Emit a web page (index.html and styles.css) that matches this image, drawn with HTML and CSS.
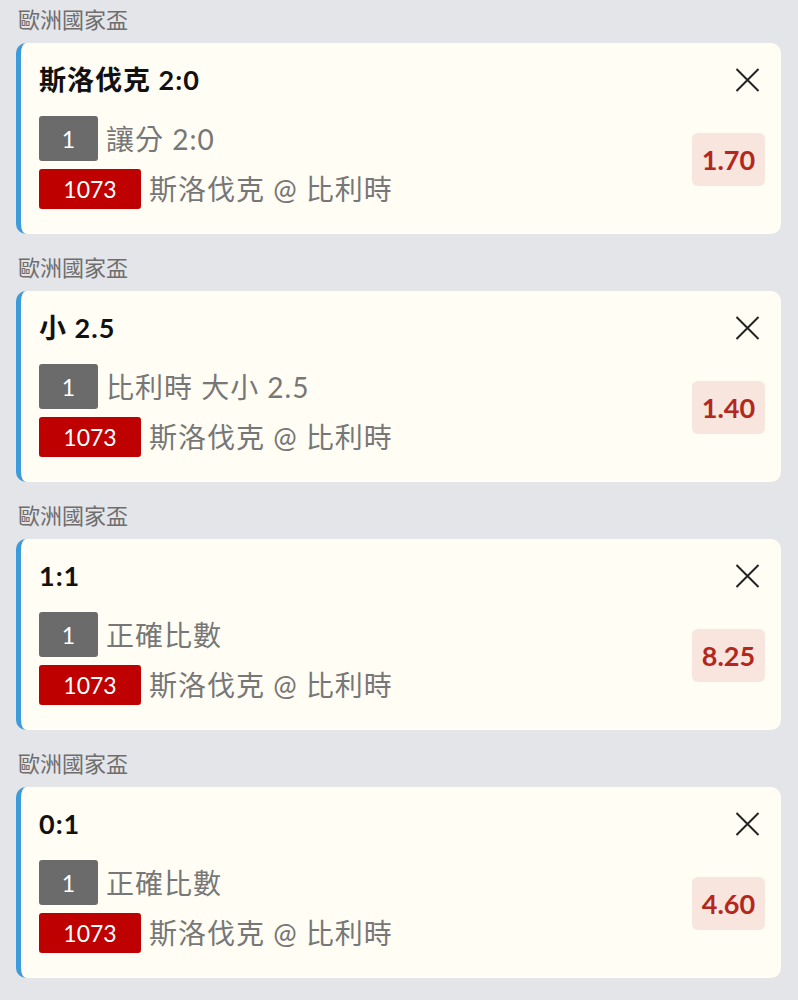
FILE: index.html
```html
<!DOCTYPE html>
<html lang="zh-Hant">
  <head>
    <meta charset="UTF-8" />
    <meta name="viewport" content="width=device-width, initial-scale=1.0" />
    <title>投注單</title>
    <link rel="stylesheet" href="styles.css">
  </head>
  <body>
    <div class="slip">
      <div class="bet">
        <p class="league">歐洲國家盃</p>
        <div class="card">
          <div class="info">
            <p class="pick">斯洛伐克 2:0</p>
            <div class="line">
              <span class="tag tag-leg">1</span>
              <span class="market">讓分 2:0</span>
            </div>
            <div class="line line-match">
              <span class="tag tag-match">1073</span>
              <span class="market">斯洛伐克 @ 比利時</span>
            </div>
          </div>
          <div class="side">
            <button class="remove" aria-label="移除">
              <svg width="25" height="24" viewBox="0 0 25 24"><path d="M1.5 1 L23.5 23 M23.5 1 L1.5 23" /></svg>
            </button>
            <span class="odds">1.70</span>
          </div>
        </div>
      </div>

      <div class="bet">
        <p class="league">歐洲國家盃</p>
        <div class="card">
          <div class="info">
            <p class="pick">小 2.5</p>
            <div class="line">
              <span class="tag tag-leg">1</span>
              <span class="market">比利時 大小 2.5</span>
            </div>
            <div class="line line-match">
              <span class="tag tag-match">1073</span>
              <span class="market">斯洛伐克 @ 比利時</span>
            </div>
          </div>
          <div class="side">
            <button class="remove" aria-label="移除">
              <svg width="25" height="24" viewBox="0 0 25 24"><path d="M1.5 1 L23.5 23 M23.5 1 L1.5 23" /></svg>
            </button>
            <span class="odds">1.40</span>
          </div>
        </div>
      </div>

      <div class="bet">
        <p class="league">歐洲國家盃</p>
        <div class="card">
          <div class="info">
            <p class="pick">1:1</p>
            <div class="line">
              <span class="tag tag-leg">1</span>
              <span class="market">正確比數</span>
            </div>
            <div class="line line-match">
              <span class="tag tag-match">1073</span>
              <span class="market">斯洛伐克 @ 比利時</span>
            </div>
          </div>
          <div class="side">
            <button class="remove" aria-label="移除">
              <svg width="25" height="24" viewBox="0 0 25 24"><path d="M1.5 1 L23.5 23 M23.5 1 L1.5 23" /></svg>
            </button>
            <span class="odds">8.25</span>
          </div>
        </div>
      </div>

      <div class="bet">
        <p class="league">歐洲國家盃</p>
        <div class="card">
          <div class="info">
            <p class="pick">0:1</p>
            <div class="line">
              <span class="tag tag-leg">1</span>
              <span class="market">正確比數</span>
            </div>
            <div class="line line-match">
              <span class="tag tag-match">1073</span>
              <span class="market">斯洛伐克 @ 比利時</span>
            </div>
          </div>
          <div class="side">
            <button class="remove" aria-label="移除">
              <svg width="25" height="24" viewBox="0 0 25 24"><path d="M1.5 1 L23.5 23 M23.5 1 L1.5 23" /></svg>
            </button>
            <span class="odds">4.60</span>
          </div>
        </div>
      </div>
    </div>
  </body>
</html>
```

FILE: styles.css
```css
body {
  margin: 0;
  background-color: #e4e5e9;
  font-family: Lato, "Noto Sans CJK TC", sans-serif;
}
p {
  margin: 0;
}
.slip {
  padding: 0 17px 0 16px;
}
.bet {
  margin-bottom: 14px;
}
.league {
  padding: 5px 0 0 2px;
  margin-bottom: 8px;
  font-size: 22px;
  line-height: 30px;
  color: #6e6e6e;
}
.card {
  display: flex;
  background-color: #fffdf4;
  border-left: 5px solid #3b9bdb;
  border-radius: 10px;
  padding: 21px 16px 25px 18px;
}
.info {
  flex: 1;
}
.pick {
  font-size: 27px;
  line-height: 32px;
  font-weight: bold;
  letter-spacing: 1px;
  color: #111;
  margin-bottom: 20px;
}
.line {
  display: flex;
  align-items: center;
  gap: 8px;
}
.line-match {
  margin-top: 8px;
}
.tag {
  display: flex;
  align-items: center;
  justify-content: center;
  color: #fff;
  font-size: 23px;
  border-radius: 3px;
}
.tag-leg {
  width: 59px;
  height: 45px;
  background-color: #6b6b6b;
}
.tag-match {
  width: 102px;
  height: 40px;
  background-color: #bf0000;
}
.market {
  font-size: 28px;
  line-height: 36px;
  letter-spacing: 1px;
  color: #777;
}
.side {
  display: flex;
  flex-direction: column;
  align-items: flex-end;
}
.remove {
  border: none;
  background: none;
  padding: 0;
  margin: 4px 5px 0 0;
  width: 25px;
  height: 24px;
}
.remove svg {
  display: block;
  stroke: #222;
  stroke-width: 2;
  fill: none;
}
.odds {
  margin-top: 41px;
  width: 73px;
  height: 53px;
  display: flex;
  align-items: center;
  justify-content: center;
  background-color: #f7e5de;
  border-radius: 6px;
  font-size: 27px;
  font-weight: bold;
  color: #b3271f;
}
```
